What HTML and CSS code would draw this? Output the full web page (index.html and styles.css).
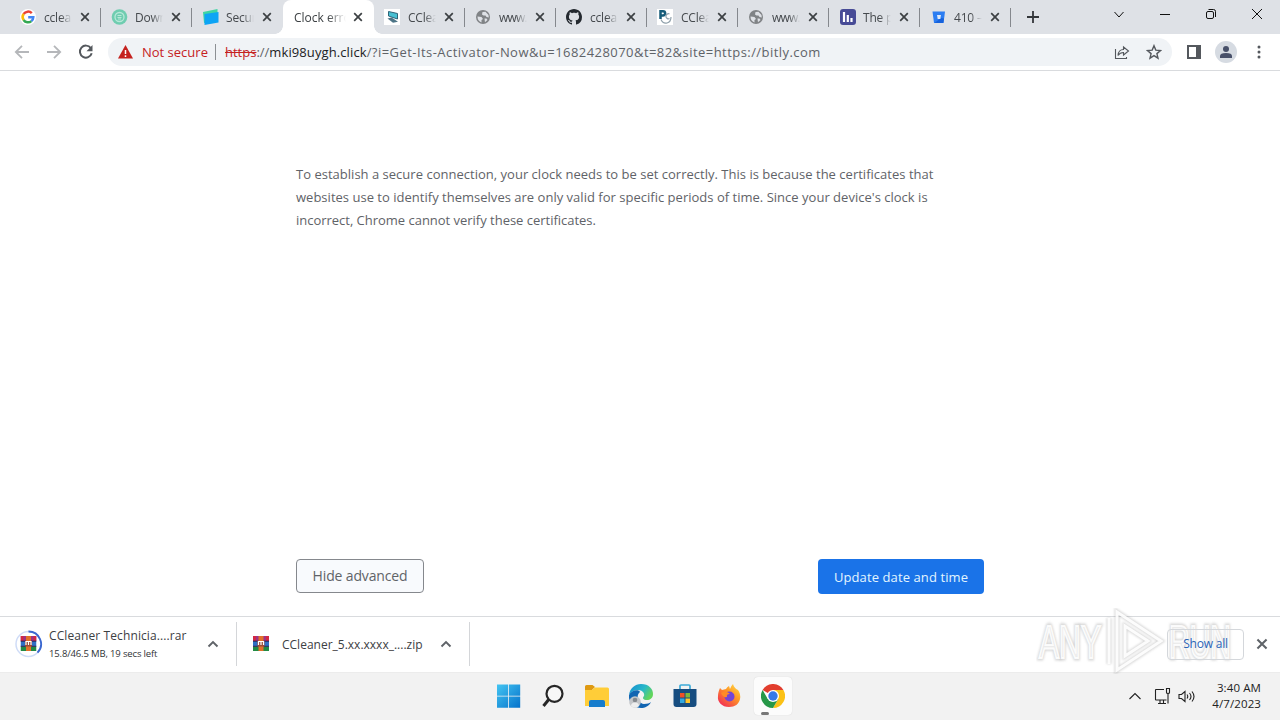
FILE: index.html
```html
<!DOCTYPE html>
<html lang="en">
<head>
    <meta charset="UTF-8">
    <title>Clock error</title>
    <link rel="stylesheet" href="styles.css">
</head>
<body>

<svg class="defs" width="0" height="0">
    <symbol id="close" viewBox="0 0 10 10">
        <path d="M1.2 1.2L8.8 8.8M8.8 1.2L1.2 8.8" fill="none" stroke="currentColor" stroke-width="1.7"/>
    </symbol>
    <symbol id="globe" viewBox="0 0 16 16">
        <circle cx="8" cy="8" r="7" fill="#808386"/>
        <path d="M2.500 7.500l4 .5 1.500 2-1.500 1v2.500Q2.500 12 2.500 7.500zM7.500 3l3-.3 3 3.300.3 2.500-2.300-.5-1-1.500H8.500l-1.500-1z" fill="#dee1e6"/>
        <path d="M9.500 9.500h2l1 1.500-2.500 2.200z" fill="#dee1e6"/>
    </symbol>
    <symbol id="chevron" viewBox="0 0 12 8">
        <path d="M1.500 6.500L6 2l4.500 4.500" fill="none" stroke="currentColor" stroke-width="1.900"/>
    </symbol>
    <symbol id="winrar" viewBox="0 0 16 16">
        <path d="M0 0h16v5H0z" fill="#9c3386"/>
        <path d="M0 5h16v5.500H0z" fill="#2f6fc5"/>
        <path d="M0 10.500h16V15H0z" fill="#218b44"/>
        <path d="M0 0h3v5H0zM13 0h3v5h-3z" fill="#d32843"/>
        <path d="M0 5.200h16M0 10.300h16" stroke="#2c2350"/>
        <path d="M5.500 0h5v15h-5z" fill="#e2702a"/>
        <path d="M4.500 5h7v5.500h-7z" fill="#9c4c36"/>
        <path d="M5.500 9V5.500h5V9M8 6v3" fill="none" stroke="#fff" stroke-width="1.200"/>
    </symbol>
</svg>

<div class="tab-strip">
    <div class="tab">
        <svg class="favicon" viewBox="0 0 16 16">
            <circle cx="8" cy="8" r="8" fill="#fff"/>
            <g fill="none" stroke-width="2.500">
                <path d="M11.800 4.200A5.300 5.300 0 0 0 3.600 5" stroke="#ea4335"/>
                <path d="M3.600 5a5.300 5.300 0 0 0 0 6" stroke="#fbbc05"/>
                <path d="M3.600 11a5.300 5.300 0 0 0 7.800 1.100" stroke="#34a853"/>
                <path d="M11.400 12.100A5.300 5.300 0 0 0 13.300 8.200H8.200" stroke="#4285f4"/>
            </g>
        </svg>
        <span class="title">cclean</span><svg class="close"><use href="#close"/></svg>
    </div>
    <div class="tab">
        <svg class="favicon" viewBox="0 0 16 16">
            <circle cx="8.500" cy="8" r="7.800" fill="#6fcdb0"/>
            <circle cx="8.500" cy="8" r="4.500" fill="none" stroke="#b8e8d9" stroke-width="1.300"/>
            <path d="M6.500 6.500h4M6.500 8.500h4M7 10h3" stroke="#b8e8d9"/>
        </svg>
        <span class="title">Downlo</span><svg class="close"><use href="#close"/></svg>
    </div>
    <div class="tab no-line">
        <svg class="favicon" viewBox="0 0 16 16">
            <path d="M1 3L15.500 0v12L2 14z" fill="#3fd5a3"/>
            <path d="M2.500 5L16.500 3v10.500L2.500 16z" fill="#0da4f5"/>
        </svg>
        <span class="title">Secure</span><svg class="close"><use href="#close"/></svg>
    </div>
    <div class="tab active">
        <span class="title">Clock error</span><svg class="close"><use href="#close"/></svg>
    </div>
    <div class="tab">
        <svg class="favicon" viewBox="0 0 16 16">
            <path d="M0 0h16v16H0z" fill="#fff"/>
            <path d="M4.500 2.500l9 2v5.500l-9-3z" fill="#49c0d2" stroke="#2f6478"/>
            <path d="M3.500 9.500l4-1 6.500 4.200-5 1z" fill="#4c7486"/>
        </svg>
        <span class="title">CClea</span><svg class="close"><use href="#close"/></svg>
    </div>
    <div class="tab">
        <svg class="favicon"><use href="#globe"/></svg>
        <span class="title tight">www.c</span><svg class="close"><use href="#close"/></svg>
    </div>
    <div class="tab">
        <svg class="favicon" viewBox="0 0 16 16">
            <path fill="#24292f" d="M8 0C3.580 0 0 3.580 0 8c0 3.540 2.290 6.530 5.470 7.590.4.070.55-.17.55-.38 0-.19-.01-.82-.01-1.490-2.010.37-2.530-.49-2.690-.94-.09-.23-.48-.94-.82-1.130-.28-.15-.68-.52-.01-.53.63-.01 1.080.58 1.230.82.72 1.210 1.870.87 2.330.66.07-.52.28-.87.51-1.070-1.780-.2-3.640-.89-3.640-3.950 0-.87.31-1.590.82-2.150-.08-.2-.36-1.020.08-2.120 0 0 .67-.21 2.200.82.64-.18 1.320-.27 2-.27s1.360.09 2 .27c1.530-1.040 2.200-.82 2.200-.82.44 1.100.16 1.920.08 2.120.51.56.82 1.270.82 2.150 0 3.070-1.870 3.750-3.650 3.950.29.25.54.73.54 1.480 0 1.070-.01 1.930-.01 2.200 0 .21.15.46.55.38A8.010 8.010 0 0 0 16 8c0-4.420-3.580-8-8-8z"/>
        </svg>
        <span class="title">cclean</span><svg class="close"><use href="#close"/></svg>
    </div>
    <div class="tab">
        <svg class="favicon" viewBox="0 0 16 16">
            <path d="M0 0h16v16H0z" fill="#fff"/>
            <path d="M3.500 10V2.200h2.500a2.100 2.100 0 0 1 0 4.300H3.500" fill="none" stroke="#155b78" stroke-width="2.500"/>
            <path d="M12.500 5a2.500 2.500 0 1 0 0 4.500M4 10.500q2 4.500 6 3.500t4-6" fill="none" stroke="#8fa0ab" stroke-width="1.200"/>
        </svg>
        <span class="title">CClea</span><svg class="close"><use href="#close"/></svg>
    </div>
    <div class="tab">
        <svg class="favicon"><use href="#globe"/></svg>
        <span class="title tight">www.c</span><svg class="close"><use href="#close"/></svg>
    </div>
    <div class="tab">
        <svg class="favicon" viewBox="0 0 16 16">
            <rect x="1" width="16" height="16" rx="3" fill="#474b96"/>
            <path d="M5 3v10M8.800 6v7M12.500 9v4" stroke="#fff" stroke-width="2.200"/>
        </svg>
        <span class="title">The p</span><svg class="close"><use href="#close"/></svg>
    </div>
    <div class="tab">
        <svg class="favicon" viewBox="0 0 16 16">
            <path d="M2.500 2.500h12.500L13.500 14H4z" fill="#2b7df2"/>
            <path d="M11 9l3 .5-.7 4.500H4.500z" fill="#1762dc"/>
            <path d="M7 6h4L10.300 10h-2.600z" fill="#dee9f8"/>
        </svg>
        <span class="title">410 – F</span><svg class="close"><use href="#close"/></svg>
    </div>
    <svg class="new-tab" viewBox="0 0 14 14"><path d="M7 1v12M1 7h12" stroke="#33363a" stroke-width="1.800"/></svg>
    <div class="window-buttons">
        <svg width="12" height="12"><path d="M1.500 4L6 9l4.500-5"/></svg>
        <svg width="12" height="12"><path d="M1 6.500h10"/></svg>
        <svg width="12" height="12"><rect x="1.500" y="3.500" width="7" height="7" rx="1.500"/><path d="M3.500 1.500H8.500a2 2 0 0 1 2 2V9"/></svg>
        <svg width="12" height="12"><path d="M1 1l10 10M11 1L1 11"/></svg>
    </div>
</div>

<div class="toolbar">
    <div class="nav">
        <svg class="off" viewBox="0 0 16 16"><path d="M15 8H2M8 1.800L1.800 8 8 14.200"/></svg>
        <svg class="off" viewBox="0 0 16 16"><path d="M1 8h13M8 1.800L14.200 8 8 14.200"/></svg>
        <svg viewBox="0 0 16 16"><path d="M12.800 4.100A6 6 0 1 0 13.700 9.300" stroke-width="2"/><path d="M14.500 1v6.200H8.500z" fill="#54585d" stroke="none"/></svg>
    </div>
    <div class="omnibox">
        <svg class="warning" width="15" height="14" viewBox="0 0 15 14"><path d="M7.500 0L15 13.500H0z" fill="#c5221f"/><path d="M7.500 5v4M7.500 10.300v1.700" stroke="#fff" stroke-width="1.500"/></svg>
        <span class="not-secure">Not secure</span>
        <span class="url"><s>https</s>://<b>mki98uygh.click</b><span class="path">/?i=Get-Its-Activator-Now&amp;u=1682428070&amp;t=82&amp;site=https://bitly.com</span></span>
        <svg class="share" width="16" height="16" viewBox="0 0 16 16"><path d="M1.500 5v9.500h11V13M4 11.500q.5-6 5.500-6V3l5 4-5 4V8.500Q6 8.500 4 11.500z"/></svg>
        <svg class="star" width="16" height="16" viewBox="0 0 16 16"><path d="M8 1.700l1.800 4.400 4.700.4-3.600 3.100 1.100 4.600L8 11.700l-4 2.500 1.100-4.600-3.600-3.100 4.700-.4z"/></svg>
    </div>
    <svg class="panel" width="14" height="14" viewBox="0 0 14 14"><path d="M0 0h14v14H0zM2 2v10h7V2z" fill="#54585d" fill-rule="evenodd"/></svg>
    <svg class="profile" width="22" height="22" viewBox="0 0 22 22"><circle cx="11" cy="11" r="11" fill="#d6dbe2"/><circle cx="11" cy="8" r="3" fill="#475069"/><path d="M5 17v-2q0-3 6-3t6 3v2z" fill="#475069"/></svg>
    <svg class="more" width="4" height="14" viewBox="0 0 4 14"><g fill="#54585d"><circle cx="2" cy="2" r="1.500"/><circle cx="2" cy="7" r="1.500"/><circle cx="2" cy="12" r="1.500"/></g></svg>
</div>

<main>
    <p>
        <span class="line1">To establish a secure connection, your clock needs to be set correctly. This is because the certificates that</span><br>
        <span class="line2">websites use to identify themselves are only valid for specific periods of time. Since your device's clock is</span><br>
        <span class="line3">incorrect, Chrome cannot verify these certificates.</span>
    </p>
    <div class="buttons">
        <button class="hide">Hide advanced</button>
        <button class="update">Update date and time</button>
    </div>
</main>

<div class="downloads">
    <div class="download first">
        <div class="progress">
            <svg width="28" height="28" viewBox="0 0 28 28"><circle cx="13.500" cy="14" r="12.500" fill="none" stroke="#cfdcf7" stroke-width="1.500"/><path d="M13.500 1.500A12.500 12.500 0 0 1 22.500 22.700" fill="none" stroke="#3b68d0" stroke-width="1.800"/><use href="#winrar" x="5.500" y="6" width="16" height="16"/></svg>
        </div>
        <div class="info">
            <div class="name name1">CCleaner Technicia....rar</div>
            <div class="status">15.8/46.5 MB, 19 secs left</div>
        </div>
        <svg class="menu"><use href="#chevron"/></svg>
    </div>
    <div class="download second">
        <svg class="file" width="16" height="16"><use href="#winrar"/></svg>
        <div class="name name2">CCleaner_5.xx.xxxx_....zip</div>
        <svg class="menu"><use href="#chevron"/></svg>
    </div>
    <button class="show-all">Show all</button>
    <svg class="close-bar"><use href="#close"/></svg>
</div>

<div class="taskbar">
    <div class="apps">
        <div class="app"><svg viewBox="0 0 24 24">
            <defs><linearGradient id="win" x1="0" y1="0" x2="1" y2="1"><stop offset="0" stop-color="#43c5f2"/><stop offset="1" stop-color="#0672cb"/></linearGradient></defs>
            <path d="M0 0.500h11.200v11.200H0zM12 0.500h11.200v11.200H12zM0 12.500h11.200v11.200H0zM12 12.500h11.200v11.200H12z" fill="url(#win)"/></svg></div>
        <div class="app"><svg viewBox="0 0 24 24"><circle cx="13.500" cy="9.800" r="8" fill="#f7f7f7" stroke="#262626" stroke-width="2.200"/><path d="M7.500 15.800L2.500 22" stroke="#262626" stroke-width="3"/></svg></div>
        <div class="app"><svg viewBox="0 0 24 24"><path d="M0 2.500Q0 1 1.500 1h6L10 3 7 6H0z" fill="#df9a12"/><path d="M0 6h7l3-2.500h12.500Q24 3.500 24 5v17H0z" fill="#ffcd38"/><path d="M4 23v-5q0-2 2-2h12q2 0 2 2v5z" fill="#167ccc"/></svg></div>
        <div class="app"><svg viewBox="0 0 24 24">
            <defs><linearGradient id="edge" x1="0" y1="0" x2="1" y2=".5"><stop offset="0" stop-color="#168bd1"/><stop offset=".6" stop-color="#28b8c9"/><stop offset="1" stop-color="#62d55c"/></linearGradient></defs>
            <path d="M0 11C1 4 6 0 12 0c8 0 12 5 12 10 0 4-3 6-6 6-4 0-5-2-3-4 1-3-2-6-6-6-5 0-8 3-9 5z" fill="url(#edge)"/>
            <path d="M0 11c2-5 10-6 11-3-4 3-3 11 4 12 3 0 6-1 7-2-2 4-6 6-10 6C5 24-1 18 0 11z" fill="#1265b2"/>
            <circle cx="6" cy="18" r="5.800" fill="#c4c6c9"/><circle cx="6" cy="16" r="2.300" fill="#85898e"/><path d="M2 22q0-3.500 4-3.500t4 3.500q-4 3-8 0z" fill="#eee"/></svg></div>
        <div class="app"><svg viewBox="0 0 24 24"><path d="M7 6V2q0-1 1-1h8q1 0 1 1v4" fill="none" stroke="#3cabd8" stroke-width="1.700"/><path d="M0.500 5h23v15q0 3-3 3h-17q-3 0-3-3z" fill="#174d80"/><path d="M7 9h4.500v4.500H7z" fill="#ef5126"/><path d="M12.500 9H17v4.500h-4.500z" fill="#7eb83b"/><path d="M7 14.500h4.500V19H7z" fill="#31a9e0"/><path d="M12.500 14.500H17V19h-4.500z" fill="#ffc52a"/></svg></div>
        <div class="app"><svg viewBox="0 0 24 24">
            <defs><linearGradient id="fox" x1="1" y1="0" x2=".2" y2="1"><stop offset="0" stop-color="#ffe34a"/><stop offset=".45" stop-color="#ff9824"/><stop offset="1" stop-color="#f12b56"/></linearGradient></defs>
            <path d="M3 4l2 2 4-1q1-2 3-3l1 3q1-3 3-5 1 4 5 6 3 4 2 9c-1 5-5 8-11 8C5 23 0 18 1 12c0-3 1-6 2-8z" fill="url(#fox)"/>
            <circle cx="12.500" cy="12.500" r="5" fill="#7345d6"/><path d="M4 9q5-3 9 1-4 0-3 3-4 1-6-4z" fill="#ff8b27"/></svg></div>
        <div class="app current"><svg viewBox="0 0 24 24">
            <path d="M12 12L1.600 6A12 12 0 0 1 22.400 6z" fill="#e23e2e"/>
            <path d="M12 12V6h10.400A12 12 0 0 1 12 24l5.200-9z" fill="#fbc116"/>
            <path d="M12 12l5.200 3L12 24A12 12 0 0 1 1.600 6l5.200 9z" fill="#279848"/>
            <circle cx="12" cy="12" r="6" fill="#fff"/><circle cx="12" cy="12" r="4.700" fill="#3579e6"/></svg></div>
    </div>
    <div class="tray">
        <svg width="14" height="14" viewBox="0 0 14 14"><path d="M1.500 9L7 3.500 12.500 9"/></svg>
        <svg width="18" height="18" viewBox="0 0 18 18"><path d="M10 1.500H2q-.5 0-.5.500v9.500q0 .5.500.5h10.500M6 12v3M9.500 12v3M4 15.500h8M12.500.500h3v4q0 1-1.500 1t-1.500-1zM14 6v9.500"/></svg>
        <svg width="18" height="14" viewBox="0 0 18 14"><path d="M1 4.500h2.500L7 1.500v10L3.500 8.500H1zM9 4.500q1.500 2 0 4M11.500 3q3 3.500 0 7M14 1.500q4 5 0 10"/></svg>
        <div class="clock">3:40 AM<br>4/7/2023</div>
    </div>
</div>

<svg class="watermark" width="204" height="66" viewBox="0 0 204 66">
    <g class="wide">
        <text x="3" y="50" textLength="62" lengthAdjust="spacingAndGlyphs">ANY</text>
        <text x="133" y="50" textLength="62" lengthAdjust="spacingAndGlyphs">RUN</text>
        <path d="M73 10V56M81 62V4L125 33zM89 18v30l23-15z"/>
    </g>
    <g class="thin">
        <text x="3" y="50" textLength="62" lengthAdjust="spacingAndGlyphs">ANY</text>
        <text x="133" y="50" textLength="62" lengthAdjust="spacingAndGlyphs">RUN</text>
        <path d="M73 10V56M81 62V4L125 33zM89 18v30l23-15z"/>
    </g>
</svg>

</body>
</html>
```
FILE: styles.css
```css
* {
    box-sizing: border-box;
}

body {
    margin: 0;
    height: 720px;
    display: flex;
    flex-direction: column;
    overflow: hidden;
    background: #fff;
    font-family: "Open Sans", "Noto Sans", sans-serif;
    font-size: 12px;
    color: #3c4043;
}

svg {
    display: block;
    flex: none;
}

.defs {
    position: absolute;
}

button {
    font-family: inherit;
    padding: 0;
    white-space: nowrap;
}

/* tabs */
.tab-strip {
    height: 34px;
    flex: none;
    display: flex;
    background: #dee1e6;
    padding-left: 10px;
}

.tab {
    width: 91px;
    height: 34px;
    padding: 0 10px;
    display: flex;
    align-items: center;
    position: relative;
    color: #45494d;
}

.tab::after {
    content: "";
    position: absolute;
    right: 0;
    top: 8px;
    width: 1px;
    height: 19px;
    background: #85888d;
}

.tab.no-line::after {
    display: none;
}

.favicon {
    width: 16px;
    height: 16px;
    margin-right: 8px;
    overflow: visible;
}

.title {
    width: 28px;
    margin-right: 8px;
    flex: none;
    overflow: hidden;
    white-space: nowrap;
    letter-spacing: -0.2px;
    -webkit-mask-image: linear-gradient(to right, #000 60%, transparent);
    mask-image: linear-gradient(to right, #000 60%, transparent);
}

.title.tight {
    letter-spacing: -0.8px;
}

.close {
    width: 10px;
    height: 10px;
    color: #3c4043;
}

.tab.active {
    background: #fff;
    border-radius: 8px 8px 0 0;
    color: #3c4043;
    padding-left: 11px;
}

/* curved feet of the active tab */
.tab.active::before,
.tab.active::after {
    content: "";
    position: absolute;
    top: auto;
    bottom: 0;
    width: 8px;
    height: 8px;
}

.tab.active::before {
    left: -8px;
    background: radial-gradient(circle at 0 0, #dee1e6 7.5px, #fff 8px);
}

.tab.active::after {
    right: -8px;
    background: radial-gradient(circle at 100% 0, #dee1e6 7.5px, #fff 8px);
}

.tab.active .title {
    width: 52px;
    margin-right: 7px;
    letter-spacing: 0;
    -webkit-mask-image: linear-gradient(to right, #000 65%, transparent);
    mask-image: linear-gradient(to right, #000 65%, transparent);
}

.new-tab {
    width: 14px;
    height: 14px;
    margin: 10px 0 0 15px;
}

.window-buttons {
    margin: 8px 17px 0 auto;
    display: flex;
    gap: 34px;
}

.window-buttons svg {
    fill: none;
    stroke: #111;
    stroke-width: 1;
}

/* address bar */
.toolbar {
    height: 37px;
    flex: none;
    display: flex;
    align-items: center;
    border-bottom: 1px solid #d9dbde;
}

.nav {
    width: 108px;
    padding-left: 14px;
    display: flex;
    gap: 16px;
}

.nav svg {
    width: 16px;
    height: 16px;
    fill: none;
    stroke: #54585d;
    stroke-width: 1.8;
}

.nav .off {
    stroke: #b5b7ba;
}

.omnibox {
    width: 1064px;
    height: 28px;
    border-radius: 14px;
    background: #f0f3f6;
    display: flex;
    align-items: center;
    padding: 0 10px;
    font-size: 13px;
    white-space: nowrap;
}

.not-secure {
    color: #c5221f;
    width: 74px;
    margin-left: 9px;
    padding-right: 7px;
    border-right: 1px solid #8c9094;
    line-height: 16px;
}

.url {
    margin-left: 9px;
    color: #5f6368;
}

.url s {
    color: #c5221f;
}

.url b {
    font-weight: normal;
    color: #202124;
    letter-spacing: 0.1px;
}

.path {
    letter-spacing: 0.45px;
}

.share {
    margin-left: auto;
    margin-right: 16px;
}

.share,
.star {
    fill: none;
    stroke: #54585d;
    stroke-width: 1.1;
}

.star {
    stroke-width: 1.4;
}

.panel {
    margin-left: 15px;
}

.profile {
    margin-left: 14px;
}

.more {
    margin-left: 20px;
}

/* page */
main {
    width: 688px;
    height: 545px;
    margin: 0 auto;
    flex: none;
    display: flex;
    flex-direction: column;
    justify-content: space-between;
    padding: 92px 0 22px;
}

main p {
    margin: 0;
    font-size: 13px;
    line-height: 23px;
    color: #5f6368;
    white-space: nowrap;
}

.line1,
.line2 {
    letter-spacing: 0.015px;
}

.line3 {
    letter-spacing: -0.02px;
}

.buttons {
    display: flex;
    justify-content: space-between;
    align-items: flex-start;
}

.hide {
    width: 128px;
    height: 34px;
    border: 1px solid #85888d;
    border-radius: 4px;
    background: #f8fafd;
    color: #5f6368;
    font-size: 14px;
    letter-spacing: -0.15px;
    padding-bottom: 2px;
}

.update {
    width: 166px;
    height: 35px;
    border: none;
    border-radius: 4px;
    background: #1a73e8;
    color: #e3f6ff;
    font-size: 13px;
    letter-spacing: 0.1px;
}

/* downloads bar */
.downloads {
    height: 56px;
    flex: none;
    display: flex;
    align-items: center;
    border-top: 1px solid #d9dbde;
    padding-bottom: 1px;
}

.download {
    height: 44px;
    display: flex;
    align-items: center;
    border-right: 1px solid #d4d6d9;
    white-space: nowrap;
}

.first {
    width: 237px;
    padding-left: 15px;
}

.info {
    width: 158px;
    margin-left: 6px;
    padding-top: 2px;
}

.name {
    font-size: 12px;
    line-height: 18px;
}

.name1 {
    letter-spacing: 0.1px;
}

.status {
    font-size: 9.5px;
    line-height: 18px;
    letter-spacing: -0.15px;
    color: #303336;
}

.menu {
    width: 12px;
    height: 8px;
    color: #5f6368;
}

.second {
    width: 233px;
    padding-left: 16px;
}

.name2 {
    width: 158px;
    margin-left: 13px;
    padding-top: 1px;
}

.show-all {
    width: 77px;
    height: 31px;
    margin-left: auto;
    margin-right: 12px;
    border: 1px solid #d4d7db;
    border-radius: 4px;
    background: transparent;
    color: #2c66b8;
    font-size: 12px;
    letter-spacing: -0.2px;
    padding-bottom: 1px;
    position: relative;
    z-index: 2;
}

.close-bar {
    width: 12px;
    height: 12px;
    margin-right: 12px;
    color: #5f6368;
}

/* taskbar */
.taskbar {
    height: 48px;
    flex: none;
    display: flex;
    justify-content: flex-end;
    background: #f2f2f2;
    border-top: 1px solid #ececec;
}

.apps {
    display: flex;
    gap: 6px;
    padding-top: 4px;
    margin-right: 336px;
}

.app {
    width: 38px;
    height: 38px;
    display: flex;
    align-items: center;
    justify-content: center;
    border-radius: 4px;
    position: relative;
}

.app svg {
    width: 24px;
    height: 24px;
}

.current {
    background: #fcfcfc;
    box-shadow: 0 0 1px #ccc;
}

.current::after {
    content: "";
    position: absolute;
    left: 7px;
    bottom: 0;
    width: 8px;
    height: 3px;
    border-radius: 2px;
    background: #777;
}

.tray {
    display: flex;
    align-items: center;
    width: 152px;
}

.tray svg {
    fill: none;
    stroke: #222;
    stroke-width: 1.1;
}

.tray svg:nth-child(2) {
    margin-left: 12px;
}

.tray svg:nth-child(3) {
    margin-left: 6px;
}

.clock {
    margin-left: auto;
    margin-right: 19px;
    padding-bottom: 1px;
    text-align: right;
    font-size: 11.5px;
    line-height: 16px;
    letter-spacing: 0.1px;
    color: #222;
    white-space: nowrap;
}

/* watermark over the page corner */
.watermark {
    position: absolute;
    left: 1036px;
    top: 608px;
    z-index: 1;
    font-family: "Liberation Sans", sans-serif;
    font-size: 46px;
    fill: none;
    pointer-events: none;
}

.wide {
    stroke: rgba(90, 90, 90, 0.24);
    stroke-width: 5;
    filter: blur(1px);
}

.thin {
    fill: rgba(255, 255, 255, 0.5);
    stroke: rgba(255, 255, 255, 0.9);
    stroke-width: 2;
}

.thin path {
    fill: none;
    stroke-width: 3;
}
```
